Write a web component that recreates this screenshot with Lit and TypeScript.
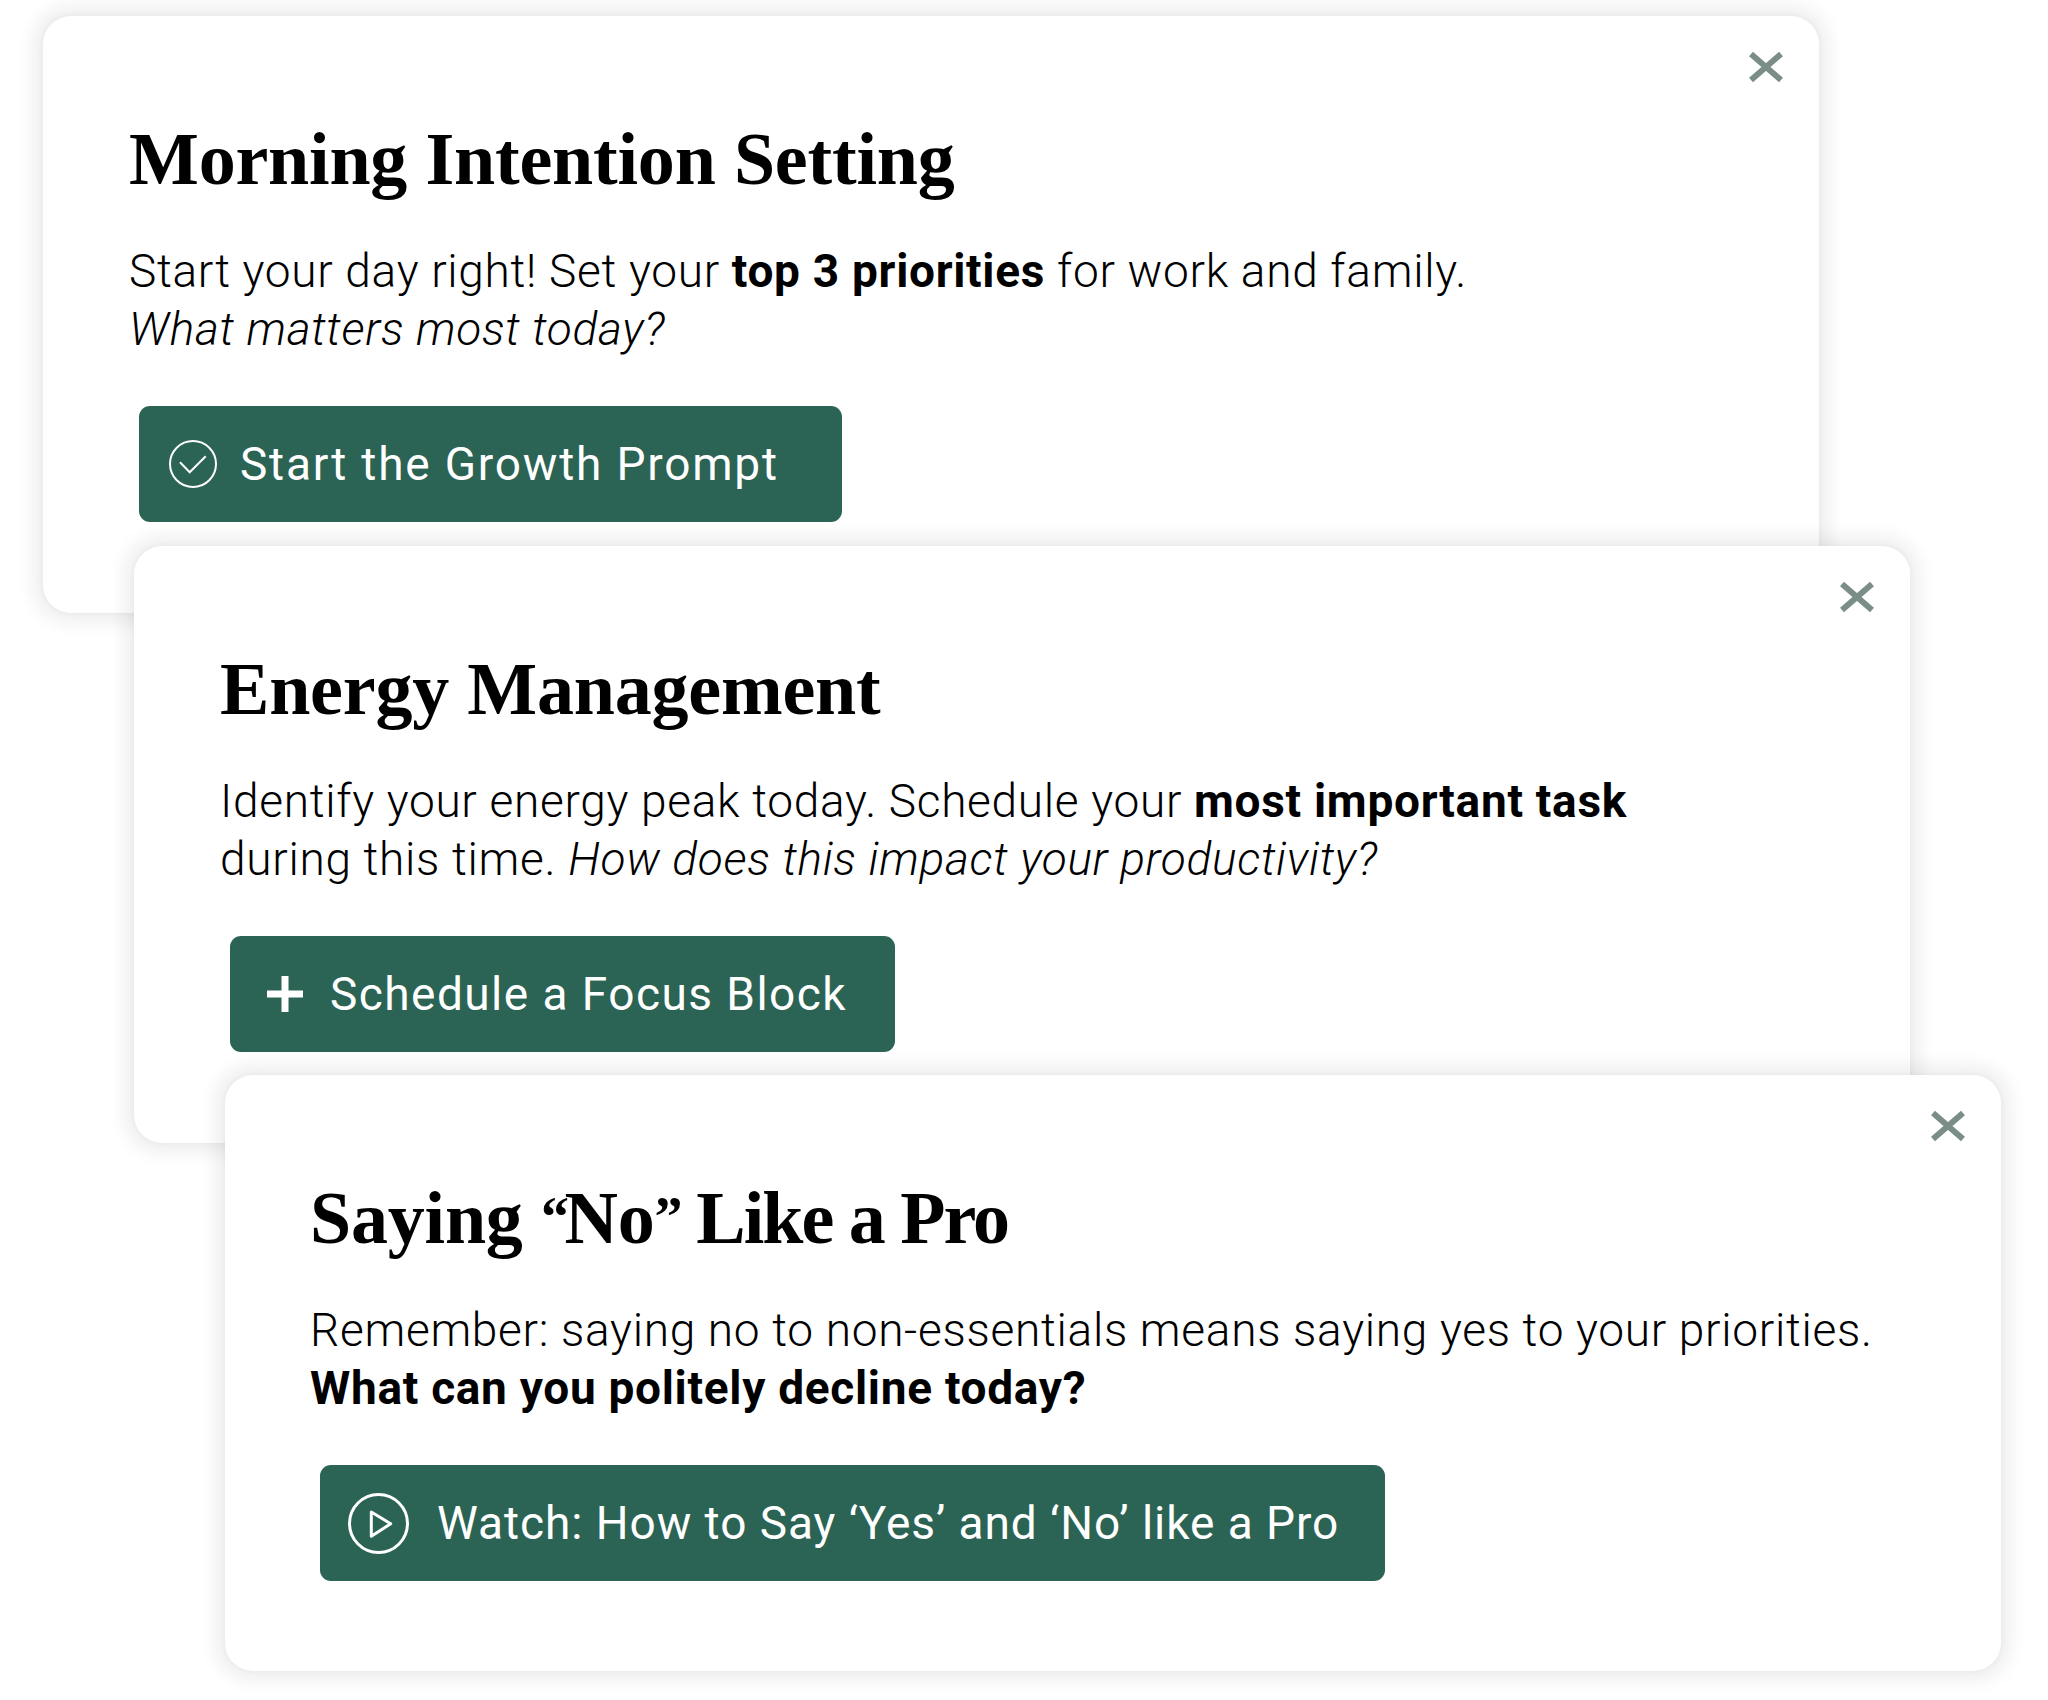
import {LitElement, css, html} from "lit";
import {customElement} from "lit/decorators.js";

const closeIcon = html`<svg class="close" viewBox="0 0 34 34" width="34" height="34">
  <path d="M2 4 L32 30 M32 4 L2 30" stroke="#7a8e87" stroke-width="6" fill="none"/>
</svg>`;

const checkIcon = html`<svg class="icon" viewBox="0 0 48 48" width="48" height="48" fill="none" stroke="#fff">
  <circle cx="24" cy="24" r="23" stroke-width="2"/>
  <path d="M11 22.3 L20.7 32.3 L36.7 16.3" stroke-width="2"/>
</svg>`;

const plusIcon = html`<svg class="icon" viewBox="0 0 36 36" width="36" height="36" fill="none" stroke="#fff">
  <path d="M0 18 H36 M18 0 V36" stroke-width="7"/>
</svg>`;

const playIcon = html`<svg class="icon" viewBox="0 0 61 61" width="61" height="61" fill="none" stroke="#fff">
  <circle cx="30.5" cy="30.5" r="29" stroke-width="3"/>
  <path d="M23.3 19 L42.7 30.7 L23.3 43.3 Z" stroke-width="3" stroke-linejoin="round"/>
</svg>`;

@customElement("app-root")
export class AppRoot extends LitElement {

  static styles = css`
    :host {
      display: block;
      width: 2048px;
      height: 1700px;
      background: #fff;
      overflow: hidden;
      font-family: Roboto, "Liberation Sans", sans-serif;
      color: #000;
    }
    .stack {
      display: flex;
      flex-direction: column;
      align-items: flex-start;
      padding: 16px 0 0 43px;
    }
    .card {
      position: relative;
      box-sizing: border-box;
      width: 1776px;
      height: 597px;
      padding: 106px 80px 0 86px;
      background: #fff;
      border-radius: 28px;
      box-shadow: 0 0 4px 2px rgba(0, 0, 0, 0.03), 0 0 16px 12px rgba(0, 0, 0, 0.055);
    }
    .card + .card {
      margin-top: -67px;
      margin-left: 91px;
    }
    .card:nth-child(3) {
      height: 596px;
      margin-top: -68px;
      margin-left: 182px;
      padding-left: 85px;
    }
    .close {
      position: absolute;
      top: 34px;
      right: 36px;
    }
    h2 {
      margin: 0;
      font-family: "Liberation Serif", serif;
      font-weight: 700;
      font-size: 74px;
      line-height: 74px;
      letter-spacing: -0.2px;
    }
    .quote {
      font-size: 56px;
      line-height: 0;
      vertical-align: 7px;
      letter-spacing: -4.5px;
    }
    .tight {
      letter-spacing: -2px;
    }
    p {
      margin: 46px 0 0;
      font-size: 46px;
      line-height: 58px;
      font-weight: 300;
      letter-spacing: 0.7px;
      white-space: nowrap;
    }
    b {
      font-weight: 700;
    }
    .btn {
      display: inline-flex;
      align-items: center;
      box-sizing: border-box;
      height: 116px;
      margin: 48px 0 0 10px;
      background: #2b6354;
      border-radius: 11px;
      color: #fff;
      font-size: 46px;
    }
    .btn.check { width: 703px; padding-left: 30px; gap: 23px; letter-spacing: 1.8px; }
    .btn.plus { width: 665px; padding-left: 37px; gap: 27px; letter-spacing: 1.45px; }
    .btn.play { width: 1065px; padding-left: 28px; gap: 28px; letter-spacing: 0.95px; }
  `

  render() {
    return html`
      <div class="stack">
        <section class="card">
          ${closeIcon}
          <h2>Morning Intention Setting</h2>
          <p>Start your day right! Set your <b>top 3 priorities</b> for work and family.<br><i>What matters most today?</i></p>
          <div class="btn check">${checkIcon}<span>Start the Growth Prompt</span></div>
        </section>
        <section class="card">
          ${closeIcon}
          <h2>Energy Management</h2>
          <p>Identify your energy peak today. Schedule your <b>most important task</b><br>during this time. <i>How does this impact your productivity?</i></p>
          <div class="btn plus">${plusIcon}<span>Schedule a Focus Block</span></div>
        </section>
        <section class="card">
          ${closeIcon}
          <h2>Saying <span class="quote">“</span>No<span class="quote">”</span> <span class="tight">Like a Pro</span></h2>
          <p>Remember: saying no to non-essentials means saying yes to your priorities.<br><b>What can you politely decline today?</b></p>
          <div class="btn play">${playIcon}<span>Watch: How to Say ‘Yes’ and ‘No’ like a Pro</span></div>
        </section>
      </div>
    `
  }

}
